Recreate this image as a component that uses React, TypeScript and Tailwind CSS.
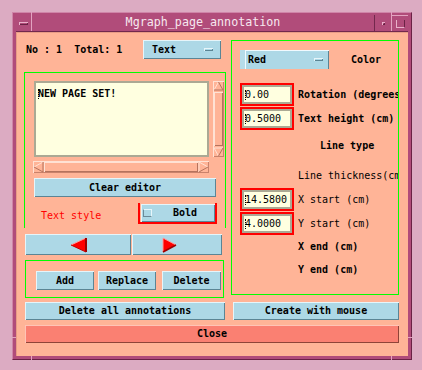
import React from "react";

const raised = "shadow-[inset_1px_1px_0_#e6f5fa,inset_-1px_-1px_0_#5b8595]";

function Btn({ children, className = "" }: { children?: React.ReactNode; className?: string }) {
  return (
    <div className={`flex items-center justify-center bg-[#add8e6] font-bold text-[10px] leading-none whitespace-pre ${raised} ${className}`}>
      {children}
    </div>
  );
}

function Field({ value }: { value: string }) {
  return (
    <div className="w-[54px] h-[23px] border-2 border-[#ff0000] shrink-0">
      <div className="w-full h-full border-2 border-[#aba994] bg-[#ffffe0] flex items-center pl-[1px]">
        <span className="h-[10px] border-l border-dotted border-black" />
        <span className="text-[10px] leading-none -ml-[1px]">{value}</span>
      </div>
    </div>
  );
}

function Label({ children, bold = true, className = "" }: { children: React.ReactNode; bold?: boolean; className?: string }) {
  return (
    <span className={`text-[10px] leading-none whitespace-pre ${bold ? "font-bold" : "font-normal"} ${className}`}>
      {children}
    </span>
  );
}

function ArrowV({ up }: { up: boolean }) {
  return (
    <svg width="11" height="10" viewBox="0 0 11 10" className="block shrink-0">
      {up ? (
        <>
          <polygon points="5.5,1 10,9 1,9" fill="#ffb497" />
          <path d="M1 9 L5.5 1" stroke="#ffe2d4" strokeWidth="1" fill="none" />
          <path d="M5.5 1 L10 9 L1 9" stroke="#b5735d" strokeWidth="1" fill="none" />
        </>
      ) : (
        <>
          <polygon points="1,1 10,1 5.5,9" fill="#ffb497" />
          <path d="M5.5 9 L1 1 L10 1" stroke="#ffe2d4" strokeWidth="1" fill="none" />
          <path d="M10 1 L5.5 9" stroke="#b5735d" strokeWidth="1" fill="none" />
        </>
      )}
    </svg>
  );
}

function ArrowH({ left }: { left: boolean }) {
  return (
    <svg width="11" height="12" viewBox="0 0 11 12" className="block shrink-0">
      {left ? (
        <>
          <polygon points="1,6 10,1 10,11" fill="#ffb497" />
          <path d="M10 1 L1 6" stroke="#ffe2d4" strokeWidth="1" fill="none" />
          <path d="M1 6 L10 11 L10 1" stroke="#b5735d" strokeWidth="1" fill="none" />
        </>
      ) : (
        <>
          <polygon points="1,1 10,6 1,11" fill="#ffb497" />
          <path d="M1 11 L1 1 L10 6" stroke="#ffe2d4" strokeWidth="1" fill="none" />
          <path d="M10 6 L1 11" stroke="#b5735d" strokeWidth="1" fill="none" />
        </>
      )}
    </svg>
  );
}

export default function App() {
  return (
    <div className="w-[422px] h-[370px] bg-[#dcabc2] pt-[12px] pl-[12px] font-['DejaVu_Sans_Mono','Liberation_Mono',monospace] text-black">
      {/* window frame */}
      <div className="relative w-[400px] h-[348px] bg-[#b14c7a] border border-t-[#cf85a8] border-l-[#cf85a8] border-b-[#6a2245] border-r-[#6a2245] pt-[2px] px-[3px] pb-[3px] flex flex-col">
        {/* title bar */}
        <div className="h-[17px] shrink-0 flex border-b border-[#72284d]">
          <div className="w-[16px] border-r border-[#e2a3c0] flex items-center justify-center">
            <div className="w-[9px] h-[3px] shadow-[inset_1px_1px_0_#eab0ca,inset_-1px_-1px_0_#6a2245]" />
          </div>
          <div className="flex-1 flex items-center justify-center text-[11.7px] leading-none text-[#f7e8ef]">
            Mgraph_page_annotation
          </div>
          <div className="w-[17px] border-l border-[#72284d] flex items-center justify-center">
            <div className="w-[3px] h-[3px] shadow-[inset_1px_1px_0_#eab0ca,inset_-1px_-1px_0_#6a2245]" />
          </div>
          <div className="w-[17px] border-l border-[#e2a3c0] border-t flex items-center justify-center">
            <div className="w-[9px] h-[8px] border-l border-b border-r border-[#eab0ca] border-r-[#6a2245]" />
          </div>
        </div>

        {/* body */}
        <div className="flex-1 bg-[#ffb497] pt-[8px] pl-[8px] pr-[9px] shadow-[inset_1px_1px_0_#e89c86]">
          <div className="flex gap-[5px] h-[258px]">
            {/* left column */}
            <div className="w-[202px] flex flex-col">
              <div className="h-[19px] flex items-center">
                <Label className="pl-[2px]">No : 1  Total: 1</Label>
                <div className={`ml-auto mr-[5px] w-[78px] h-[19px] bg-[#add8e6] flex items-center pl-[9px] ${raised}`}>
                  <Label>Text</Label>
                  <div className={`ml-auto mr-[8px] w-[9px] h-[3px] ${raised}`} />
                </div>
              </div>

              <div className="mt-[13px] h-[156px] border-t border-x border-[#00ff00] pt-[8px] pl-[9px] flex flex-col">
                <div className="flex gap-[4px] h-[76px]">
                  <div className="w-[175px] h-full border-2 border-[#aba994] bg-[#ffffe0] pl-[2px] pt-[6px]">
                    <div className="flex items-start">
                      <span className="h-[10px] border-l border-dotted border-black" />
                      <span className="text-[10px] leading-none font-bold -ml-[1px]">NEW PAGE SET!</span>
                    </div>
                  </div>
                  <div className="w-[11px] h-full flex flex-col shadow-[inset_1px_1px_0_#ffe2d4,inset_-1px_-1px_0_#c9826b]">
                    <ArrowV up />
                    <div className="flex-1 mx-[1px] my-[1px] shadow-[inset_1px_1px_0_#ffe2d4,inset_-1px_-1px_0_#b5735d]" />
                    <ArrowV up={false} />
                  </div>
                </div>
                <div className="mt-[4px] w-[176px] -ml-[1px] h-[12px] flex shadow-[inset_1px_1px_0_#ffe2d4,inset_-1px_-1px_0_#c9826b]">
                  <ArrowH left />
                  <div className="flex-1 my-[1px] shadow-[inset_1px_1px_0_#ffe2d4,inset_-1px_-1px_0_#b5735d]" />
                  <ArrowH left={false} />
                </div>
                <Btn className="mt-[5px] w-[182px] h-[19px]">Clear editor</Btn>
                <div className="mt-[6px] h-[21px] flex items-center">
                  <div className="w-[104px] pl-[7px]">
                    <Label bold={false} className="text-[#ff0000]">Text style</Label>
                  </div>
                  <div className="w-[79px] h-[21px] border-x-2 border-b-2 border-[#ff0000] pt-[1px] pl-[1px]">
                    <div className={`w-[74px] h-[18px] bg-[#add8e6] flex items-center pl-[2px] ${raised}`}>
                      <div className="w-[9px] h-[8px] border-l border-b border-[#6a8a99] border-t border-r border-t-[#e6f5fa] border-r-[#e6f5fa]" />
                      <Label className="ml-[21px]">Bold</Label>
                    </div>
                  </div>
                </div>
              </div>

              <div className="mt-[6px] ml-[1px] h-[21px] flex gap-[1px]">
                <Btn className="w-[106px] h-[21px]">
                  <svg width="17" height="16" viewBox="0 0 17 16" className="block">
                    <polygon points="1,8 16,1 16,15" fill="#ff0000" />
                    <path d="M1 8 L16 1" stroke="#ff9a9a" strokeWidth="1" fill="none" />
                    <path d="M16 1 L16 15" stroke="#9c0000" strokeWidth="2" fill="none" />
                    <path d="M1 8 L16 15" stroke="#c00000" strokeWidth="1" fill="none" />
                  </svg>
                </Btn>
                <Btn className="w-[90px] h-[21px] !justify-start pl-[30px]">
                  <svg width="15" height="16" viewBox="0 0 15 16" className="block">
                    <polygon points="1,1 14,8 1,15" fill="#ff0000" />
                    <path d="M1 15 L1 1 L14 8" stroke="#ff9a9a" strokeWidth="1" fill="none" />
                    <path d="M14 8 L1 15" stroke="#9c0000" strokeWidth="1.5" fill="none" />
                  </svg>
                </Btn>
              </div>

              <div className="mt-[5px] ml-[1px] w-[199px] h-[38px] border border-[#00ff00] pt-[10px] pl-[10px] flex">
                <Btn className="w-[58px] h-[19px]">Add</Btn>
                <Btn className="ml-[4px] w-[58px] h-[19px]">Replace</Btn>
                <Btn className="ml-[6px] w-[59px] h-[19px]">Delete</Btn>
              </div>
            </div>

            {/* right column */}
            <div className="w-[168px] h-[255px] border border-[#00ff00] overflow-hidden flex flex-col">
              <div className="mt-[9px] h-[19px] flex items-center">
                <div className="ml-[8px] w-[89px] h-[19px] bg-[#b6dce9] pl-[5px]">
                  <div className="w-full h-full bg-[#add8e6] flex items-center pl-[3px] shadow-[inset_1px_1px_0_#f0faff,inset_-1px_0_0_#5b8595]">
                    <Label>Red</Label>
                    <div className={`ml-auto mr-[6px] w-[9px] h-[3px] ${raised}`} />
                  </div>
                </div>
                <Label className="ml-[22px]">Color</Label>
              </div>

              <div className="mt-[14px] h-[23px] flex items-center gap-[4px] pl-[8px]">
                <Field value="0.00" />
                <Label>Rotation (degrees</Label>
              </div>
              <div className="mt-[1px] h-[23px] flex items-center gap-[4px] pl-[8px]">
                <Field value="0.5000" />
                <Label>Text height (cm)</Label>
              </div>
              <div className="mt-[6px] h-[20px] flex items-center pl-[88px]">
                <Label>Line type</Label>
              </div>
              <div className="mt-[10px] h-[20px] flex items-center pl-[66px]">
                <Label bold={false}>Line thickness(cm</Label>
              </div>
              <div className="mt-[2px] h-[23px] flex items-center gap-[4px] pl-[8px]">
                <Field value="14.5800" />
                <Label bold={false}>X start (cm)</Label>
              </div>
              <div className="mt-[1px] h-[23px] flex items-center gap-[4px] pl-[8px]">
                <Field value="4.0000" />
                <Label bold={false}>Y start (cm)</Label>
              </div>
              <div className="mt-[2px] h-[20px] flex items-center pl-[66px]">
                <Label>X end (cm)</Label>
              </div>
              <div className="mt-[3px] h-[20px] flex items-center pl-[66px]">
                <Label>Y end (cm)</Label>
              </div>
            </div>
          </div>

          <div className="mt-[4px] flex">
            <Btn className="ml-[1px] w-[200px] h-[18px]">Delete all annotations</Btn>
            <Btn className="ml-[8px] w-[166px] h-[18px]">Create with mouse</Btn>
          </div>
          <div className="mt-[5px] ml-[1px] w-[374px] h-[18px] flex items-center justify-center bg-[#fa8072] font-bold text-[10px] leading-none shadow-[inset_1px_1px_0_#ffc4b6,inset_-1px_-1px_0_#8e4438]">
            Close
          </div>
        </div>

        {/* frame corner marks */}
        <span className="absolute left-[18px] top-[-1px] w-[1px] h-[3px] bg-[#e2a3c0]" />
        <span className="absolute left-[378px] top-[-1px] w-[1px] h-[3px] bg-[#e2a3c0]" />
        <span className="absolute left-[18px] bottom-[-1px] w-[1px] h-[4px] bg-[#e2a3c0]" />
        <span className="absolute left-[378px] bottom-[-1px] w-[1px] h-[4px] bg-[#e2a3c0]" />
        <span className="absolute left-[-1px] bottom-[21px] w-[4px] h-[1px] bg-[#e2a3c0]" />
        <span className="absolute right-[-1px] bottom-[21px] w-[4px] h-[1px] bg-[#e2a3c0]" />
      </div>
    </div>
  );
}
